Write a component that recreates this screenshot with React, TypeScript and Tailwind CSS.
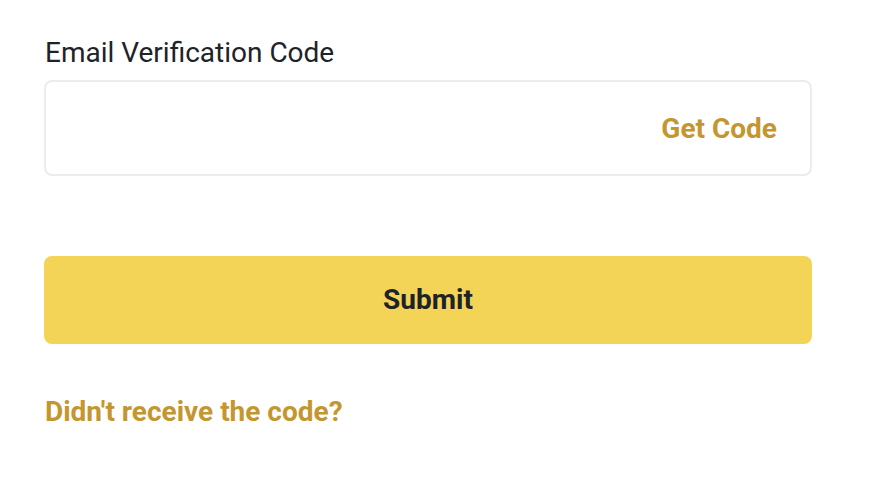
import React from "react";

export default function App() {
  return (
    <div className="w-[892px] h-[480px] bg-white pl-[44px] pt-[35px] font-['Roboto','Liberation_Sans',sans-serif]">
      <div className="w-[768px] flex flex-col">
        <label className="pl-px text-[28px] leading-[36px] text-[#1e2329] font-normal">
          Email Verification Code
        </label>
        <div className="mt-[9px] h-[96px] border-2 border-[#eaecef] rounded-[8px] flex items-center justify-end pr-[33px]">
          <span className="pt-[2px] text-[28px] font-bold text-[#c4962f]">Get Code</span>
        </div>
        <button className="mt-[80px] h-[88px] rounded-[8px] bg-[#f4d456] text-[28px] font-bold text-[#1e2329]">
          Submit
        </button>
        <div className="mt-[50px] pl-px text-[28px] leading-[36px] font-bold text-[#c4962f]">
          Didn't receive the code?
        </div>
      </div>
    </div>
  );
}
